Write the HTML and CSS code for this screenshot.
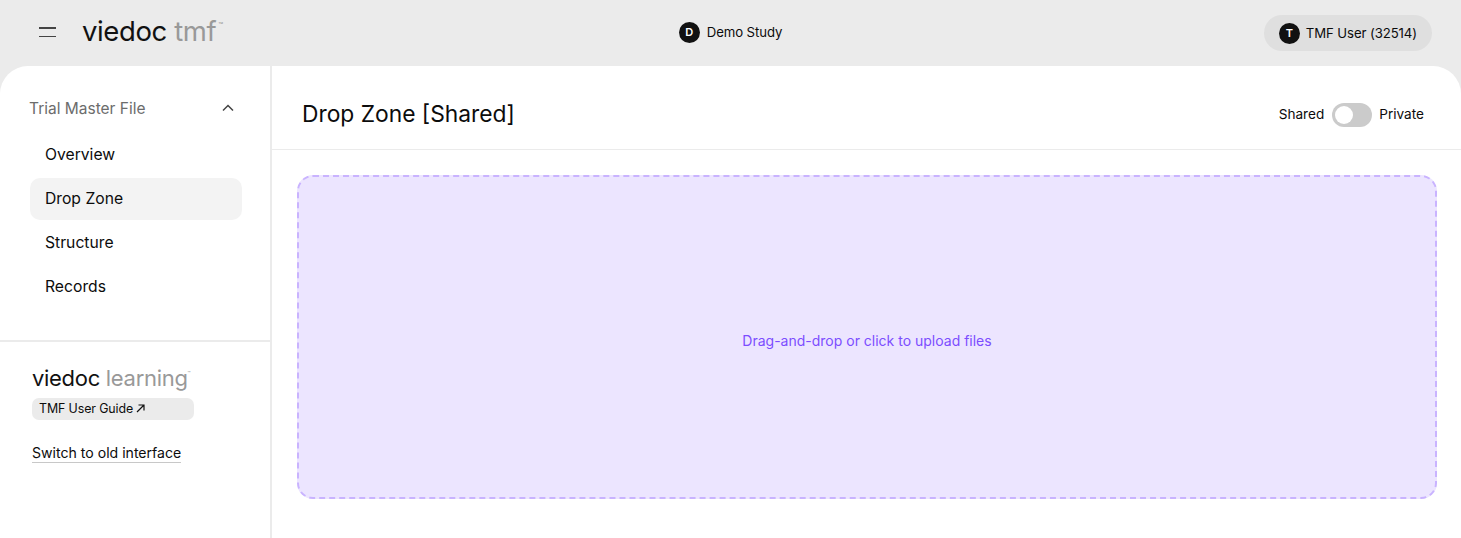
FILE: index.html
```html
<!DOCTYPE html>
<html lang="en">
<head>
<meta charset="utf-8">
<title>Drop Zone</title>
<link rel="stylesheet" href="styles.css">
</head>
<body>
<header class="topbar">
  <div class="brand-group">
    <button class="menu-btn" aria-label="Menu"><span></span><span></span></button>
    <div class="logo logo-large">viedoc <em>tmf</em><sup>™</sup></div>
  </div>
  <div class="study"><span class="avatar">D</span><span>Demo Study</span></div>
  <div class="user"><span class="avatar">T</span><span>TMF User (32514)</span></div>
</header>
<div class="shell">
  <aside class="sidebar">
    <nav class="nav">
      <div class="nav-title">
        <span>Trial Master File</span>
        <svg width="12" height="8" viewBox="0 0 12 8" fill="none"><path d="M1 6.5 6 1.5l5 5" stroke="#444" stroke-width="1.5"/></svg>
      </div>
      <a class="nav-item">Overview</a>
      <a class="nav-item active">Drop Zone</a>
      <a class="nav-item">Structure</a>
      <a class="nav-item">Records</a>
    </nav>
    <div class="side-foot">
      <div class="logo logo-small">viedoc <em>learning</em><sup>™</sup></div>
      <a class="guide">TMF User Guide <svg width="9" height="9" viewBox="0 0 9 9" fill="none"><path d="M1 8 8 1M2.5 1H8v5.5" stroke="#111" stroke-width="1.2"/></svg></a>
      <a class="switch">Switch to old interface</a>
    </div>
  </aside>
  <main class="main">
    <div class="main-head">
      <h1>Drop Zone [Shared]</h1>
      <div class="toggle-row"><span class="toggle-label">Shared</span><span class="toggle"><i></i></span><span class="toggle-label">Private</span></div>
    </div>
    <div class="drop">Drag-and-drop or click to upload files</div>
  </main>
</div>
</body>
</html>
```
FILE: styles.css
```css
* { box-sizing: border-box; }
html, body { margin: 0; height: 100%; }
body {
  height: 538px;
  overflow: hidden;
  background: #ebebeb;
  color: #0c0c0c;
  font-family: "Inter", "Liberation Sans", sans-serif;
  display: flex;
  flex-direction: column;
}
.topbar {
  height: 66px;
  flex: none;
  display: grid;
  grid-template-columns: 1fr auto 1fr;
  align-items: center;
  padding: 0 29px 2px 29px;
}
.brand-group { display: flex; align-items: center; gap: 26px; margin-left: 10px; }
.menu-btn {
  width: 17px; height: 10px; padding: 0; border: 0; background: none;
  display: flex; flex-direction: column; justify-content: space-between;
}
.menu-btn span { display: block; height: 1.5px; background: #444; }
.logo { font-family: "Inter", "Liberation Sans", sans-serif; font-weight: 400; color: #111; white-space: nowrap; }
.logo em { font-style: normal; color: #999; }
.logo sup { color: #999; vertical-align: baseline; position: relative; }
.logo-large { font-size: 27.5px; letter-spacing: -0.4px; line-height: 34px; padding-top: 4px; }
.logo-large sup { font-size: 8px; top: -13px; left: 2px; }
.logo-small { font-size: 22px; letter-spacing: -0.3px; line-height: 28px; }
.logo-small sup { font-size: 5px; top: -11px; }
.study, .user { display: flex; align-items: center; font-size: 13.2px; letter-spacing: -0.1px; }
.study { gap: 7px; }
.user {
  justify-self: end; gap: 6px; height: 36px; padding: 0 15px 0 15px; margin-top: 2px;
  background: #dfdfdf; border-radius: 18px;
}
.avatar {
  width: 21px; height: 21px; border-radius: 50%;
  background: #111; color: #fff; font-size: 11px; font-weight: 600;
  display: flex; align-items: center; justify-content: center;
}
.shell {
  flex: 1;
  min-height: 0;
  display: flex;
  background: #fff;
  border-radius: 28px 28px 0 0;
}
.sidebar {
  width: 272px; flex: none;
  border-right: 2px solid #ebebeb;
  display: flex; flex-direction: column;
}
.nav {
  height: 276px;
  padding: 20px 28px 0 30px;
  border-bottom: 2px solid #ebebeb;
  flex: none;
}
.nav-title {
  display: flex; justify-content: space-between; align-items: center;
  height: 44px; padding-right: 8px; margin-bottom: 4px; color: #6c6c6c; font-size: 15.5px;
  margin-left: -1px;
}
.nav-item {
  display: flex; align-items: center; height: 42px; margin-bottom: 2px;
  padding: 0 0 2px 15px; font-size: 15.7px; border-radius: 10px; color: #0c0c0c;
}
.nav-item.active { background: #f3f3f3; }
.side-foot { padding: 22px 30px 0 32px; display: flex; flex-direction: column; align-items: flex-start; }
.guide {
  display: flex; align-items: center; gap: 3px; width: 162px; height: 22px; margin-top: 0;
  padding: 0 0 1px 7px; background: #ebebeb; border-radius: 7px; font-size: 12.4px; letter-spacing: -0.1px;
}
.switch {
  margin-top: 23px; font-size: 14.1px; line-height: 19px;
  border-bottom: 1px solid #c8c8c8; padding-bottom: 0;
}
.main { flex: 1; min-width: 0; display: flex; flex-direction: column; }
.main-head {
  height: 84px; flex: none;
  display: flex; align-items: center; justify-content: space-between;
  padding: 12px 37px 0 30px;
  border-bottom: 1px solid #ebebeb;
}
h1 { margin: 0; font-size: 22.8px; font-weight: 400; letter-spacing: 0; }
.toggle-row { display: flex; align-items: center; gap: 8px; font-size: 13.6px; padding-top: 2px; }
.toggle-label { padding-bottom: 2px; }
.toggle {
  width: 40px; height: 24px; border-radius: 12px; background: #cbcbcb; padding: 3px; display: flex; margin-right: -1px;
}
.toggle i { width: 18px; height: 18px; border-radius: 50%; background: #fff; }
.drop {
  height: 324px; margin: 25px 24px 0 25px; padding-top: 6px;
  background: #ece5ff;
  border: 2px dashed #c9b3ff;
  border-radius: 16px;
  color: #7c4dff;
  font-size: 14px;
  display: flex; align-items: center; justify-content: center;
}
```
